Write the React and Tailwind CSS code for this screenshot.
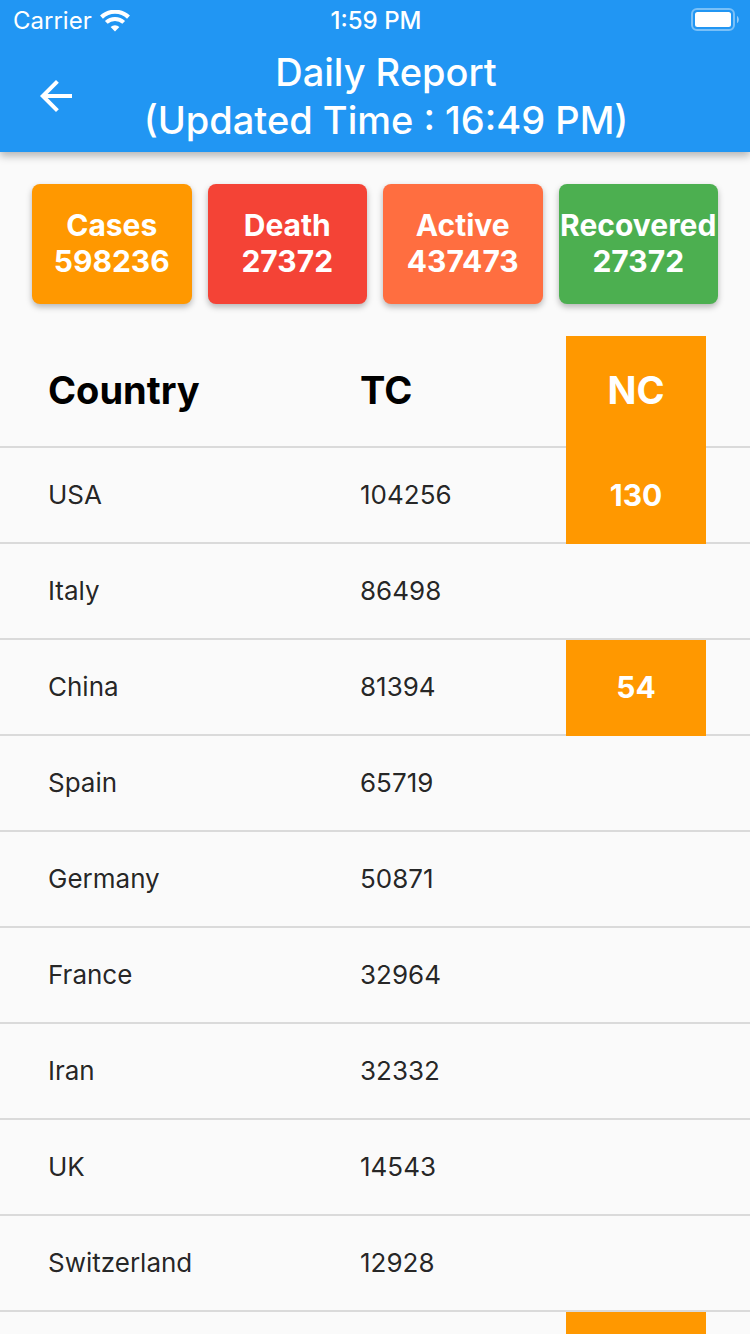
const stats = [
  { label: 'Cases', value: '598236', color: 'bg-[#ff9800]' },
  { label: 'Death', value: '27372', color: 'bg-[#f44336]' },
  { label: 'Active', value: '437473', color: 'bg-[#ff6e40]' },
  { label: 'Recovered', value: '27372', color: 'bg-[#4caf50]' },
];

const countries = [
  { name: 'USA', total: '104256', fresh: '130' },
  { name: 'Italy', total: '86498' },
  { name: 'China', total: '81394', fresh: '54' },
  { name: 'Spain', total: '65719' },
  { name: 'Germany', total: '50871' },
  { name: 'France', total: '32964' },
  { name: 'Iran', total: '32332' },
  { name: 'UK', total: '14543' },
  { name: 'Switzerland', total: '12928' },
];

function WifiIcon() {
  return (
    <svg className="h-[22px] w-[30px]" viewBox="0 0 30 22" fill="none" aria-hidden="true">
      <path d="M1.500 7.100a19.700 19.700 0 0 1 27 0" stroke="white" strokeWidth="4.200" />
      <path d="M6.300 12.400a12.600 12.600 0 0 1 17.400 0" stroke="white" strokeWidth="4" />
      <path d="M10.600 17a6.600 6.600 0 0 1 8.800 0L15 21.500z" fill="white" />
    </svg>
  );
}

function BatteryIcon() {
  return (
    <svg className="h-[26px] w-12" viewBox="0 0 48 26" aria-hidden="true">
      <rect x="1" y="1" width="42" height="21" rx="5" fill="none" stroke="white" strokeOpacity="0.4" strokeWidth="2" />
      <rect x="4" y="4" width="36" height="15" rx="2.500" fill="white" />
      <path d="M46 8c2.400 1.200 2.400 6 0 7.200z" fill="white" fillOpacity="0.5" />
    </svg>
  );
}

function StatusBar() {
  return (
    <div className="grid h-10 grid-cols-3 pr-[11px] pl-[13px] text-2xl leading-[42px]">
      <div className="flex items-center gap-2">
        <span>Carrier</span>
        <WifiIcon />
      </div>
      <span className="text-center font-medium">1:59 PM</span>
      <div className="flex items-center justify-end">
        <BatteryIcon />
      </div>
    </div>
  );
}

function NewCases({ children }) {
  return (
    <div className="-mb-0.5 flex h-24 items-center justify-center bg-[#ff9800] pb-0.5 text-[30px] font-bold text-white">
      {children}
    </div>
  );
}

export default function App() {
  return (
    <div className="flex h-screen flex-col overflow-hidden bg-[#fafafa] font-['Inter',sans-serif] text-black">
      <header className="relative shrink-0 bg-[#2196f3] text-white shadow-[0_4px_8px_rgba(0,0,0,0.28)]">
        <StatusBar />
        <div className="flex h-28 items-center pr-[90px]">
          <button type="button" aria-label="Back" className="flex h-28 w-28 shrink-0 items-center justify-center">
            <svg className="h-12 w-12" viewBox="0 0 24 24" fill="white" aria-hidden="true">
              <path d="M20 11H7.830l5.590-5.590L12 4l-8 8 8 8 1.410-1.410L7.830 13H20v-2z" />
            </svg>
          </button>
          <h1 className="flex-1 text-center text-[38px] leading-[48px] font-medium whitespace-nowrap">
            Daily Report
            <br />
            (Updated Time : 16:49 PM)
          </h1>
        </div>
      </header>

      <main className="min-h-0 flex-1 overflow-hidden">
        <section className="grid grid-cols-4 gap-4 p-8">
          {stats.map((s) => (
            <div
              key={s.label}
              className={`flex h-[120px] flex-col items-center justify-center rounded-lg pb-0.5 text-[30px] leading-9 font-bold text-white shadow-[0_3px_6px_rgba(0,0,0,0.28)] ${s.color}`}
            >
              <span>{s.label}</span>
              <span>{s.value}</span>
            </div>
          ))}
        </section>

        <table className="w-full table-fixed border-separate border-spacing-0 text-left">
          <thead>
            <tr className="h-28 text-[38px] font-bold [&>th]:border-b-2 [&>th]:border-[#dadada]">
              <th scope="col" className="w-[48%] pt-0 pb-0.5 pl-12">Country</th>
              <th scope="col" className="p-0 pb-0.5">TC</th>
              <th scope="col" className="w-[184px] p-0 pr-11">
                <div className="-mb-0.5 flex h-28 items-center justify-center bg-[#ff9800] pb-1 text-white">NC</div>
              </th>
            </tr>
          </thead>
          <tbody className="text-[26px] text-black/87 [&>tr>td]:border-b-2 [&>tr>td]:border-[#dadada]">
            {countries.map((c) => (
              <tr key={c.name} className="h-24">
                <td className="pt-0 pb-0.5 pl-12">{c.name}</td>
                <td className="p-0 pb-0.5">{c.total}</td>
                <td className="p-0 pr-11">{c.fresh && <NewCases>{c.fresh}</NewCases>}</td>
              </tr>
            ))}
            <tr className="h-24">
              <td />
              <td />
              <td className="p-0 pr-11">
                <NewCases />
              </td>
            </tr>
          </tbody>
        </table>
      </main>
    </div>
  );
}
